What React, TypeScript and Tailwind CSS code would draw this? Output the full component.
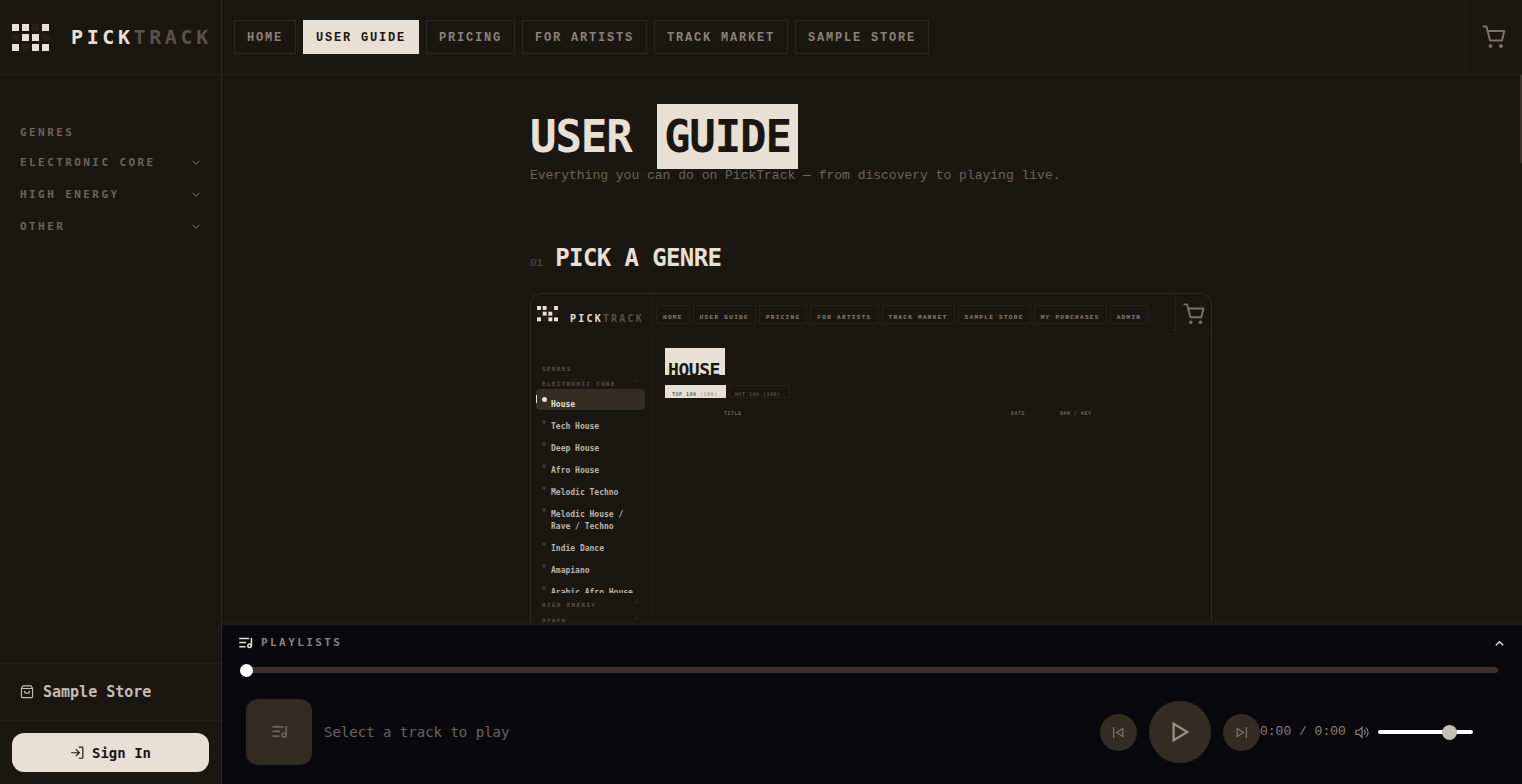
import type { ReactNode } from "react";

const navItems = ["HOME", "USER GUIDE", "PRICING", "FOR ARTISTS", "TRACK MARKET", "SAMPLE STORE"];

const genreGroups = ["ELECTRONIC CORE", "HIGH ENERGY", "OTHER"];

const previewNav = [...navItems, "MY PURCHASES", "ADMIN"];

const previewGenres = [
  "House",
  "Tech House",
  "Deep House",
  "Afro House",
  "Melodic Techno",
  "Melodic House / Rave / Techno",
  "Indie Dance",
  "Amapiano",
  "Arabic Afro House",
];

const logoCells = [
  [1, 1, 0, 1],
  [0, 1, 1, 0],
  [1, 0, 1, 1],
];

const Logo = ({ className }: { className: string }) => (
  <svg viewBox="0 0 37 27" className={className} aria-hidden="true">
    {logoCells.map((row, y) =>
      row.map((on, x) => (
        <rect
          key={`${x}-${y}`}
          x={x * 10}
          y={y * 10}
          width="7"
          height="7"
          fill={on ? "#e8e0d5" : "#251f1a"}
        />
      ))
    )}
  </svg>
);

type IconProps = { className: string };

const Icon = ({ className, children }: IconProps & { children: ReactNode }) => (
  <svg
    viewBox="0 0 24 24"
    className={`shrink-0 ${className}`}
    fill="none"
    stroke="currentColor"
    strokeWidth="2"
    aria-hidden="true"
  >
    {children}
  </svg>
);

const ChevronDownIcon = ({ className }: IconProps) => (
  <Icon className={className}>
    <path d="M4 7l8 8 8-8" strokeWidth="2.5" />
  </Icon>
);

const ChevronUpIcon = ({ className }: IconProps) => (
  <Icon className={className}>
    <path d="M4 16l8-8 8 8" strokeWidth="3" />
  </Icon>
);

const PlaylistIcon = ({ className }: IconProps) => (
  <Icon className={className}>
    <path d="M2 4h16M2 10.500h11M2 17h10" strokeWidth="2.4" />
    <path d="M21.500 3v13" strokeWidth="2.4" />
    <circle cx="18.500" cy="15.500" r="2.800" strokeWidth="2.4" />
  </Icon>
);

const CartIcon = ({ className }: IconProps) => (
  <Icon className={className}>
    <path d="M1.500 1.500h3l3.500 14h12l2.300-9.500H5.500" strokeLinejoin="round" strokeLinecap="round" />
    <circle cx="8.500" cy="21" r="1.500" fill="currentColor" strokeWidth="1" />
    <circle cx="19" cy="21" r="1.500" fill="currentColor" strokeWidth="1" />
  </Icon>
);

const BagIcon = ({ className }: IconProps) => (
  <Icon className={className}>
    <path d="M5 1.500h14l2.500 4v14.500a1.500 1.500 0 0 1-1.500 1.500H4A1.500 1.500 0 0 1 2.500 20V5.500z" strokeLinejoin="round" />
    <path d="M2.500 6h19M7.500 10c.5 5.500 8.500 5.500 9 0" />
  </Icon>
);

const SignInIcon = ({ className }: IconProps) => (
  <Icon className={className}>
    <path d="M2 11.500h14M10 5.500l6 6-6 6" />
    <path d="M15 2h5.500a1.500 1.500 0 0 1 1.500 1.500v16a1.500 1.500 0 0 1-1.500 1.500H15" />
  </Icon>
);

const PlayIcon = ({ className }: IconProps) => (
  <Icon className={className}>
    <path d="M5 3v18l15-9z" strokeWidth="2.4" />
  </Icon>
);

const PreviousIcon = ({ className }: IconProps) => (
  <Icon className={className}>
    <path d="M3 2v20M20 4.500v15L8.500 12z" strokeWidth="2.4" />
  </Icon>
);

const NextIcon = ({ className }: IconProps) => (
  <Icon className={className}>
    <path d="M21 2v20M4 4.500v15L15.500 12z" strokeWidth="2.4" />
  </Icon>
);

const VolumeIcon = ({ className }: IconProps) => (
  <Icon className={className}>
    <path d="M12 4v17l-5-5H1.500V9H7z" />
    <path d="M15.500 8.500a5 5 0 0 1 0 8M18.500 4.500a10 10 0 0 1 0 16" />
  </Icon>
);

const Sidebar = () => (
  <aside className="flex w-[222px] shrink-0 flex-col border-r border-[#2a2722]">
    <a href="#" className="flex h-[75px] items-center border-b border-[#24211b] pl-3">
      <Logo className="w-[37px]" />
      <span className="ml-[22px] text-xl font-bold tracking-[0.18em] text-[#e8e0d5]">
        PICK<span className="text-[#57514a]">TRACK</span>
      </span>
    </a>
    <nav className="flex-1 px-5 pt-[49px] text-[11px] font-bold tracking-[0.22em] text-[#6b645b]">
      <h2 className="leading-[18px]">GENRES</h2>
      <div className="mt-[5px]">
        {genreGroups.map((group) => (
          <button
            key={group}
            type="button"
            className="flex h-8 w-full items-center justify-between tracking-[0.22em]"
          >
            {group}
            <ChevronDownIcon className="size-[10px]" />
          </button>
        ))}
      </div>
    </nav>
    <a
      href="#"
      className="flex h-[57px] items-center gap-[9px] border-t border-[#24211b] px-5 text-[15px] font-bold text-[#c4bcb0]"
    >
      <BagIcon className="size-[14px]" />
      Sample Store
    </a>
    <div className="border-t border-[#24211b] p-3">
      <button
        type="button"
        className="flex h-[39px] w-full items-center justify-center gap-2 rounded-xl bg-[#e8e0d5] text-sm font-bold text-[#1a1711]"
      >
        <SignInIcon className="size-[14px]" />
        Sign In
      </button>
    </div>
  </aside>
);

const Header = () => (
  <header className="flex h-[75px] shrink-0 items-center border-b border-[#24211b] pl-3">
    <nav className="flex flex-1 gap-[7px] font-['Liberation_Mono',monospace] text-xs font-bold tracking-[0.15em]">
      {navItems.map((item) => (
        <a
          key={item}
          href="#"
          className={
            item === "USER GUIDE"
              ? "border border-[#e8e0d5] bg-[#e8e0d5] px-3 pt-2 pb-1.5 leading-[18px] text-[#1a1711]"
              : "border border-[#2a2722] px-3 pt-2 pb-1.5 leading-[18px] text-[#8a8276]"
          }
        >
          {item}
        </a>
      ))}
    </nav>
    <button
      type="button"
      aria-label="Cart"
      className="flex h-full w-[57px] items-center justify-center border-l border-[#24211b] text-[#7a7368]"
    >
      <CartIcon className="size-6" />
    </button>
  </header>
);

// Miniature of the genre page shown under step 01
const GenrePreview = () => (
  <figure className="mt-[19px] flex h-[400px] overflow-hidden rounded-xl border border-[#2f2b25]">
    <div className="w-[120px] shrink-0 border-r border-[#1f1c16] pl-[5px]">
      <div className="flex h-10 items-center pl-px">
        <Logo className="w-[21px]" />
        <span className="ml-3 pt-[10px] text-[10px] leading-4 font-bold tracking-[0.22em] text-[#e8e0d5]">
          PICK<span className="text-[#57514a]">TRACK</span>
        </span>
      </div>
      <div className="mt-[30px] pl-[6px] text-[6px] leading-[10px] font-bold tracking-[0.22em] text-[#57514a]">
        GENRES
      </div>
      <div className="mt-[5px] flex justify-between pr-[11px] pl-[6px] text-[6px] leading-[10px] font-bold tracking-[0.22em] text-[#57514a]">
        ELECTRONIC CORE
        <ChevronDownIcon className="size-[5px]" />
      </div>
      <ul className="h-[204px] overflow-hidden text-[8px] leading-3 font-bold text-[#bcb4a8]">
        {previewGenres.map((genre, i) => (
          <li
            key={genre}
            className={
              i === 0
                ? "relative mb-px flex h-[21px] w-[109px] gap-1 rounded bg-[#342d23] pt-[10px] pl-[6px] text-[#e8e0d5]"
                : "flex w-[109px] gap-[5px] pt-[10px] pl-[6px]"
            }
          >
            {i === 0 && <span className="absolute top-[6px] left-0 h-2 w-px bg-[#e8e0d5]" />}
            <span
              className={
                i === 0
                  ? "-mt-[2px] size-[5px] shrink-0 rounded-full bg-[#e8e0d5]"
                  : "-mt-px size-1 shrink-0 rounded-full bg-[#3a352e]"
              }
            />
            {genre}
          </li>
        ))}
      </ul>
      <div className="mt-[7px] pr-[11px] pl-[6px] text-[6px] leading-[10px] font-bold tracking-[0.22em] text-[#57514a]">
        <div className="flex justify-between">
          HIGH ENERGY
          <ChevronDownIcon className="size-[5px]" />
        </div>
        <div className="mt-[6px] flex justify-between">
          OTHER
          <ChevronDownIcon className="size-[5px]" />
        </div>
      </div>
    </div>
    <div className="min-w-0 flex-1">
      <div className="flex h-10 border-b border-[#1f1c16] pl-[5px]">
        <div className="flex flex-1 gap-[3px] pt-[11px] font-['Liberation_Mono',monospace] text-[6px] font-bold tracking-[0.22em] whitespace-nowrap text-[#8a8276]">
          {previewNav.map((item) => (
            <span key={item} className="h-[19px] border border-[#24211b] px-[6px] leading-6">
              {item}
            </span>
          ))}
        </div>
        <span className="flex w-9 items-center justify-center border-l border-[#24211b] text-[#7a7368]">
          <CartIcon className="size-[22px]" />
        </span>
      </div>
      <div className="pt-[14px] pl-[14px]">
        <div className="h-[27px] w-[60px] overflow-hidden bg-[#e8e0d5] pt-[11px] pl-[3px] text-lg leading-[22px] font-bold tracking-tight text-[#1a1711]">
          HOUSE
        </div>
        <div className="mt-[10px] flex gap-[3px] text-[5px] tracking-widest whitespace-nowrap">
          <span className="h-[13px] w-[61px] bg-[#e8e0d5] pl-[7px] leading-[18px] text-[#1a1711]">
            TOP 100 <span className="text-[#8a8276]">(100)</span>
          </span>
          <span className="h-[13px] w-[61px] border border-[#24211b] pl-[5px] leading-4 text-[#6b645b]">
            HOT 100 (100)
          </span>
        </div>
        <div className="mt-[10px] flex text-[5px] leading-[10px] font-bold tracking-widest text-[#6b645b]">
          <span className="flex-1 pl-[59px]">TITLE</span>
          <span className="w-[49px]">DATE</span>
          <span className="w-[151px]">BPM / KEY</span>
        </div>
      </div>
    </div>
  </figure>
);

const Guide = () => (
  <main className="relative min-h-0 flex-1 overflow-hidden pr-[2px]">
    <div className="mx-auto max-w-[682px] pt-[38px]">
      <h1 className="text-[44px] leading-[48px] font-bold tracking-tight text-[#e8e0d5]">
        USER <span className="bg-[#e8e0d5] p-[7px] text-[#1a1711]">GUIDE</span>
      </h1>
      <p className="mt-[5px] font-['Liberation_Mono',monospace] text-[13px] leading-5 text-[#6b645b]">
        Everything you can do on PickTrack — from discovery to playing live.
      </p>
      <section className="mt-14">
        <div className="flex items-baseline gap-3">
          <span className="font-['Liberation_Mono',monospace] text-[11px] text-[#57514a]">01</span>
          <h2 className="text-2xl font-bold tracking-tight text-[#e8e0d5]">PICK A GENRE</h2>
        </div>
        <GenrePreview />
      </section>
    </div>
    {/* scroll thumb */}
    <div className="absolute top-0 right-0 h-[88px] w-[2px] bg-[#3a332d]" />
  </main>
);

const Player = () => (
  <footer className="shrink-0 border-t-[3px] border-[#1d1a14] bg-[#09090d] pb-[19px]">
    <button
      type="button"
      className="flex h-9 w-full items-center gap-2 pr-[17px] pl-4 text-[11px] font-bold tracking-[0.22em] text-[#8a8276]"
    >
      <PlaylistIcon className="size-[15px] text-[#e8e0d5]" />
      PLAYLISTS
      <ChevronUpIcon className="ml-auto size-[11px] text-[#e8e0d5]" />
    </button>
    <div className="flex h-[18px] items-center pr-6 pl-[18px]">
      <input
        type="range"
        aria-label="Seek"
        defaultValue={0}
        className="h-[6px] w-full appearance-none rounded-full bg-[#3d302b] [&::-webkit-slider-thumb]:size-[13px] [&::-webkit-slider-thumb]:appearance-none [&::-webkit-slider-thumb]:rounded-full [&::-webkit-slider-thumb]:bg-white"
      />
    </div>
    <div className="flex items-center pt-5 pr-[49px] pl-6">
      <div className="flex size-[66px] items-center justify-center rounded-xl bg-[#332b22] text-[#6b645b]">
        <PlaylistIcon className="size-[17px]" />
      </div>
      <p className="ml-3 flex-1 text-sm text-[#6b645b]">Select a track to play</p>
      <div className="flex items-center gap-3">
        <button
          type="button"
          aria-label="Previous"
          className="flex size-[37px] items-center justify-center rounded-full bg-[#332c22] text-[#7a7064]"
        >
          <PreviousIcon className="size-[13px]" />
        </button>
        <button
          type="button"
          aria-label="Play"
          className="flex size-[62px] items-center justify-center rounded-full bg-[#332c22] text-[#9a9184]"
        >
          <PlayIcon className="size-[22px]" />
        </button>
        <button
          type="button"
          aria-label="Next"
          className="flex size-[37px] items-center justify-center rounded-full bg-[#332c22] text-[#7a7064]"
        >
          <NextIcon className="size-[13px]" />
        </button>
      </div>
      <span className="w-[84px] font-['Liberation_Mono',monospace] text-[13px] whitespace-nowrap text-[#8a8276]">
        0:00 / 0:00
      </span>
      <VolumeIcon className="ml-[11px] size-[14px] text-[#8a8276]" />
      <input
        type="range"
        aria-label="Volume"
        defaultValue={80}
        className="ml-[9px] h-1 w-[95px] appearance-none rounded-full bg-white [&::-webkit-slider-thumb]:size-[15px] [&::-webkit-slider-thumb]:appearance-none [&::-webkit-slider-thumb]:rounded-full [&::-webkit-slider-thumb]:bg-[#c4c0b4]"
      />
    </div>
  </footer>
);

const App = () => {
  return (
    <div className="flex h-screen overflow-hidden bg-[#1a1711] font-['DejaVu_Sans_Mono',monospace]">
      <Sidebar />
      <div className="flex min-w-0 flex-1 flex-col">
        <Header />
        <Guide />
        <Player />
      </div>
    </div>
  );
};

export default App;
